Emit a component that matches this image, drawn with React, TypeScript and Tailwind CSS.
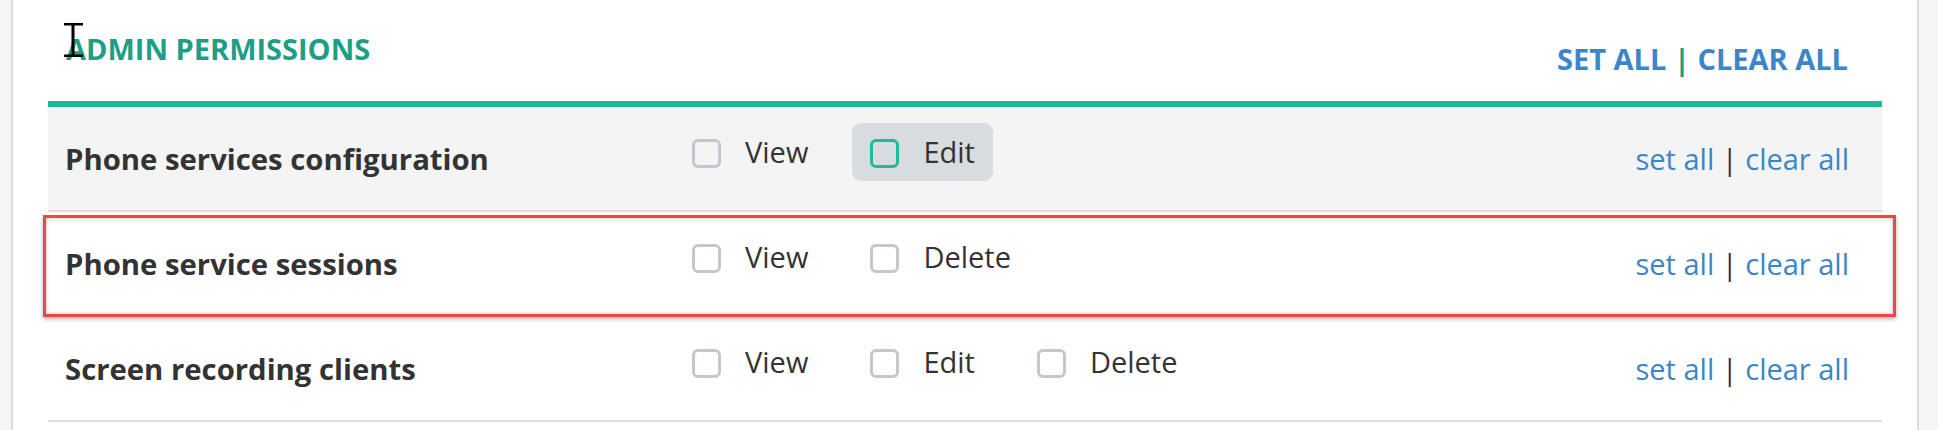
import React from "react";

type Opt = { label: string; active?: boolean };

const rows: { title: string; opts: Opt[]; bg?: boolean; highlight?: boolean }[] = [
  { title: "Phone services configuration", opts: [{ label: "View" }, { label: "Edit", active: true }], bg: true },
  { title: "Phone service sessions", opts: [{ label: "View" }, { label: "Delete" }], highlight: true },
  { title: "Screen recording clients", opts: [{ label: "View" }, { label: "Edit" }, { label: "Delete" }] },
];

function Option({ label, active }: Opt) {
  return (
    <div
      className={
        "flex h-[58px] items-center gap-[24px] rounded-[9px] px-[18px] " +
        (active ? "bg-[#d7dcdf]" : "")
      }
    >
      <span
        className={
          "mt-[4px] box-border block h-[29px] w-[29px] rounded-[6px] border-[3px] " +
          (active ? "border-[#22b99a]" : "border-[#c4c8cc]")
        }
      />
      <span className="text-[29px] leading-[40px] text-[#333333]">{label}</span>
    </div>
  );
}

export default function App() {
  return (
    <div className="h-[430px] w-[1938px] overflow-hidden bg-[#f5f5f7] pl-[11px] pr-[19px] font-['Open_Sans',sans-serif]">
      <div className="h-full border-x-2 border-[#dddddd] bg-white px-[35px]">
        <div className="relative flex h-[101px] items-start justify-between">
          <h2 className="ml-[18px] mt-[29px] text-[29px] font-bold leading-[40px] text-[#1f9e86]">
            ADMIN PERMISSIONS
          </h2>
          <svg
            className="absolute left-[16px] top-[23px]"
            width="20"
            height="35"
            viewBox="0 0 20 35"
          >
            <rect x="0" y="0" width="19" height="2.5" fill="#000" />
            <rect x="7.5" y="0" width="3" height="34" fill="#000" />
            <rect x="0" y="31.5" width="19" height="2.5" fill="#000" />
          </svg>
          <div className="mr-[34px] mt-[39px] text-[29px] font-bold leading-[40px] text-[#3c85c8]">
            SET ALL <span className="text-[#1f9e86]">|</span> CLEAR ALL
          </div>
        </div>
        <div className="h-[6px] bg-[#22b99a]" />
        {rows.map((r) => (
          <div
            key={r.title}
            className={
              "relative flex h-[105px] items-center border-b-2 border-[#dcdcdc] pl-[17px] pr-[33px] " +
              (r.bg ? "bg-[#f4f4f4]" : "")
            }
          >
            <div className="w-[609px] text-[29.3px] font-bold leading-[40px] text-[#333333]">{r.title}</div>
            <div className="mb-[14px] flex gap-[26px]">
              {r.opts.map((o) => (
                <Option key={o.label} {...o} />
              ))}
            </div>
            <div className="ml-auto text-[29px] leading-[40px] text-[#3c85c8]">
              set all <span className="text-[#333333]">|</span> clear all
            </div>
            {r.highlight && (
              <div className="pointer-events-none absolute bottom-[-2px] left-[-5px] right-[-14px] top-[3px] z-10 border-[3px] border-[#f0464a] shadow-[0_2px_4px_rgba(0,0,0,0.3),inset_0_0_4px_rgba(0,0,0,0.25)]" />
            )}
          </div>
        ))}
      </div>
    </div>
  );
}
